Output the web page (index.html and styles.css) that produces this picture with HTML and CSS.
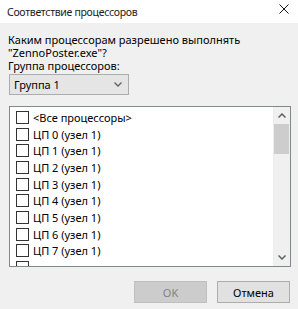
FILE: index.html
```html
<!DOCTYPE html>
<html lang="ru">
<head>
    <meta charset="UTF-8">
    <title>Соответствие процессоров</title>
    <link rel="stylesheet" href="styles.css">
</head>
<body>
    <div class="dialog">
        <!-- Title bar -->
        <div class="titlebar">
            <span class="title">Соответствие процессоров</span>
            <svg class="close" width="10" height="10" viewBox="0 0 10 10">
                <path d="M0.5 0.5 L9.5 9.5 M9.5 0.5 L0.5 9.5" stroke="#111" stroke-width="1"/>
            </svg>
        </div>

        <div class="content">
            <div class="prompt">
                <div>Каким процессорам разрешено выполнять</div>
                <div>"ZennoPoster.exe"?</div>
                <div>Группа процессоров:</div>
            </div>

            <div class="combo">
                <span>Группа 1</span>
                <svg width="8" height="5" viewBox="0 0 8 5">
                    <polyline points="0.5,0.5 4,4 7.5,0.5" fill="none" stroke="#606060" stroke-width="1.3"/>
                </svg>
            </div>

            <!-- CPU list -->
            <div class="listbox">
                <div class="items">
                    <div class="item"><span class="check"></span>&lt;Все процессоры&gt;</div>
                    <div class="item"><span class="check"></span>ЦП 0 (узел 1)</div>
                    <div class="item"><span class="check"></span>ЦП 1 (узел 1)</div>
                    <div class="item"><span class="check"></span>ЦП 2 (узел 1)</div>
                    <div class="item"><span class="check"></span>ЦП 3 (узел 1)</div>
                    <div class="item"><span class="check"></span>ЦП 4 (узел 1)</div>
                    <div class="item"><span class="check"></span>ЦП 5 (узел 1)</div>
                    <div class="item"><span class="check"></span>ЦП 6 (узел 1)</div>
                    <div class="item"><span class="check"></span>ЦП 7 (узел 1)</div>
                    <div class="item"><span class="check"></span></div>
                </div>
                <div class="scrollbar">
                    <div class="arrow">
                        <svg width="8" height="5" viewBox="0 0 8 5">
                            <polyline points="0.5,4.5 4,1 7.5,4.5" fill="none" stroke="#606060" stroke-width="1.5"/>
                        </svg>
                    </div>
                    <div class="thumb"></div>
                    <div class="track"></div>
                    <div class="arrow">
                        <svg width="8" height="5" viewBox="0 0 8 5">
                            <polyline points="0.5,0.5 4,4 7.5,0.5" fill="none" stroke="#606060" stroke-width="1.5"/>
                        </svg>
                    </div>
                </div>
            </div>

            <div class="buttons">
                <button class="btn" disabled>OK</button>
                <button class="btn">Отмена</button>
            </div>
        </div>
    </div>
</body>
</html>
```

FILE: styles.css
```css
body {
    margin: 0;
    padding: 0;
    background-color: #f0f0f0;
    font-family: "Noto Sans", "Open Sans", sans-serif;
    font-size: 11px;
    color: #000;
}

.dialog {
    width: 298px;
    height: 309px;
    overflow: hidden;
}

/* Title bar */
.titlebar {
    height: 23px;
    background-color: #fff;
    display: flex;
    justify-content: space-between;
    align-items: center;
    padding: 0 9px 0 7px;
}

.titlebar .title {
    font-size: 10.5px;
    letter-spacing: -0.3px;
    line-height: 23px;
    margin-top: 1px;
    color: #1b1b1b;
}

.titlebar .close {
    margin-top: -5px;
}

.content {
    padding: 10px 8px 0 8px;
}

.prompt {
    line-height: 13px;
}

/* Combo box */
.combo {
    margin: 2px 0 0 1px;
    width: 120px;
    height: 21px;
    box-sizing: border-box;
    background-color: #e5e5e5;
    border: 1px solid #acacac;
    display: flex;
    justify-content: space-between;
    align-items: center;
    padding: 0 6px 0 4px;
}

/* List box */
.listbox {
    margin: 11px 0 0 1px;
    width: 282px;
    height: 161px;
    box-sizing: border-box;
    border: 1px solid #828790;
    background-color: #fff;
    display: flex;
    overflow: hidden;
}

.items {
    flex: 1;
    padding-top: 2px;
    overflow: hidden;
}

.item {
    height: 16.7px;
    display: flex;
    align-items: center;
    padding-left: 6px;
    white-space: nowrap;
}

.check {
    width: 13px;
    height: 13px;
    box-sizing: border-box;
    border: 1px solid #333;
    background-color: #fff;
    margin-right: 4px;
    flex-shrink: 0;
}

.scrollbar {
    width: 17px;
    background-color: #f0f0f0;
    border-left: 1px solid #e8eef5;
    box-sizing: border-box;
    display: flex;
    flex-direction: column;
}

.scrollbar .arrow {
    height: 17px;
    display: flex;
    justify-content: center;
    align-items: center;
}

.scrollbar .thumb {
    height: 30px;
    margin: 0 1px 0 0;
    background-color: #cdcdcd;
}

.scrollbar .track {
    flex: 1;
}

/* Buttons */
.buttons {
    margin-top: 14px;
    display: flex;
    justify-content: flex-end;
    gap: 10px;
}

.btn {
    width: 73px;
    height: 22px;
    font-family: inherit;
    font-size: 11px;
    background-color: #e1e1e1;
    border: 1px solid #adadad;
    color: #000;
    padding: 0;
}

.btn:disabled {
    background-color: #cccccc;
    border-color: #bfbfbf;
    color: #838383;
}
```
